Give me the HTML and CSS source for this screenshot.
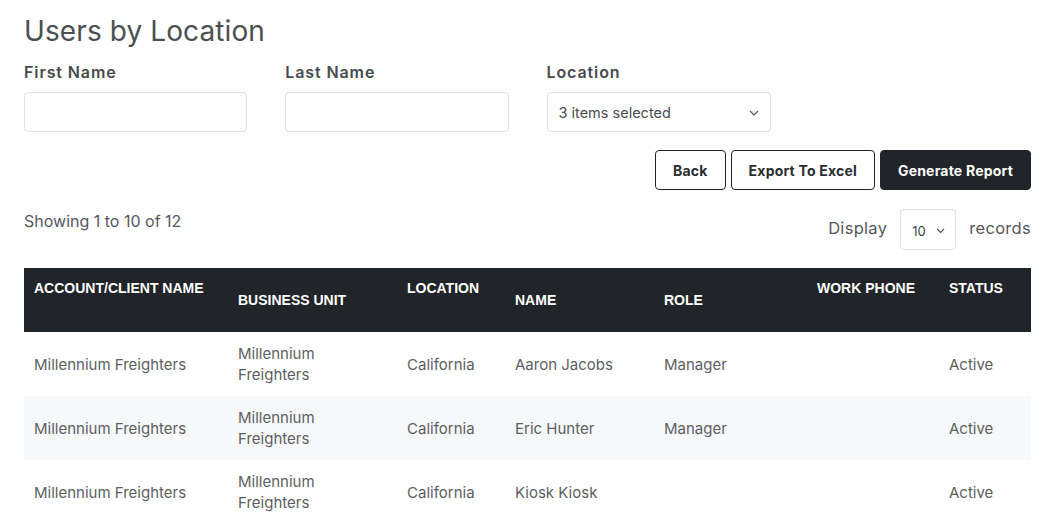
FILE: index.html
```html
<!DOCTYPE html>
<html lang="en">
<head>
<meta charset="utf-8">
<title>Users by Location</title>
<link rel="stylesheet" href="styles.css">
</head>
<body>
<div class="page">
  <h1 class="title">Users by Location</h1>

  <div class="filters">
    <div class="field">
      <label class="label">First Name</label>
      <input class="input" type="text">
    </div>
    <div class="field">
      <label class="label">Last Name</label>
      <input class="input" type="text">
    </div>
    <div class="field">
      <label class="label">Location</label>
      <div class="select">
        <span>3 items selected</span>
        <svg class="chev" width="10" height="6" viewBox="0 0 10 6"><path d="M1 1l4 4 4-4" fill="none" stroke="#555" stroke-width="1.2"/></svg>
      </div>
    </div>
  </div>

  <div class="actions">
    <button class="btn btn-outline">Back</button>
    <button class="btn btn-outline">Export To Excel</button>
    <button class="btn btn-dark">Generate Report</button>
  </div>

  <div class="tablebar">
    <span class="showing">Showing 1 to 10 of 12</span>
    <div class="display">
      <span>Display</span>
      <div class="mini-select">
        <span>10</span>
        <svg class="chev" width="9" height="6" viewBox="0 0 9 6"><path d="M1 1l3.5 3.5L8 1" fill="none" stroke="#555" stroke-width="1.1"/></svg>
      </div>
      <span>records</span>
    </div>
  </div>

  <table class="grid">
    <colgroup>
      <col class="c1"><col class="c2"><col class="c3"><col class="c4"><col class="c5"><col class="c6"><col class="c7">
    </colgroup>
    <thead>
      <tr>
        <th class="top">ACCOUNT/CLIENT NAME</th>
        <th>BUSINESS UNIT</th>
        <th class="top">LOCATION</th>
        <th>NAME</th>
        <th>ROLE</th>
        <th class="top">WORK PHONE</th>
        <th class="top">STATUS</th>
      </tr>
    </thead>
    <tbody>
      <tr>
        <td>Millennium Freighters</td>
        <td class="unit">Millennium Freighters</td>
        <td>California</td>
        <td>Aaron Jacobs</td>
        <td>Manager</td>
        <td></td>
        <td>Active</td>
      </tr>
      <tr>
        <td>Millennium Freighters</td>
        <td class="unit">Millennium Freighters</td>
        <td>California</td>
        <td>Eric Hunter</td>
        <td>Manager</td>
        <td></td>
        <td>Active</td>
      </tr>
      <tr>
        <td>Millennium Freighters</td>
        <td class="unit">Millennium Freighters</td>
        <td>California</td>
        <td>Kiosk Kiosk</td>
        <td></td>
        <td></td>
        <td>Active</td>
      </tr>
    </tbody>
  </table>
</div>
</body>
</html>
```

FILE: styles.css
```css
* { box-sizing: border-box; }

html, body {
  margin: 0;
  padding: 0;
  background: #ffffff;
}

body {
  font-family: Inter, "Liberation Sans", sans-serif;
  color: #555759;
  overflow: hidden;
}

.page {
  padding: 0 24px;
}

.title {
  margin: 14px 0 0;
  font-size: 28px;
  line-height: 34px;
  font-weight: 400;
  letter-spacing: 0.1px;
  color: #4c4f52;
}

.filters {
  display: grid;
  grid-template-columns: repeat(4, minmax(0, 1fr));
  column-gap: 38px;
  margin-top: 14px;
}

.field {
  display: flex;
  flex-direction: column;
  min-width: 0;
}

.label {
  font-size: 16px;
  line-height: 20px;
  font-weight: 600;
  letter-spacing: 0.9px;
  color: #474a4d;
  margin-bottom: 10px;
}

.input {
  width: 100%;
  height: 40px;
  border: 1px solid #dfe1e4;
  border-radius: 4px;
  background: #fff;
  font: inherit;
  margin: 0;
}

.select {
  height: 40px;
  border: 1px solid #dfe1e4;
  border-radius: 4px;
  display: flex;
  align-items: center;
  justify-content: space-between;
  padding: 1px 11px 0 11px;
  font-size: 14.5px;
  color: #4a4d50;
  margin-right: -1px;
}

.actions {
  display: flex;
  justify-content: flex-end;
  gap: 5px;
  margin-top: 18px;
}

.btn {
  height: 40px;
  border-radius: 4px;
  font-family: Inter, "Liberation Sans", sans-serif;
  font-size: 14px;
  font-weight: 700;
  letter-spacing: 0.2px;
  padding: 0 17px;
  margin: 0;
  cursor: pointer;
}

.btn-outline {
  background: #fff;
  border: 1px solid #212529;
  color: #2a2d31;
}

.btn-dark {
  background: #212529;
  border: 1px solid #212529;
  color: #fff;
}

.tablebar {
  display: flex;
  justify-content: space-between;
  align-items: flex-start;
  margin-top: 19px;
}

.showing {
  font-size: 16px;
  line-height: 24px;
  color: #55585b;
}

.display {
  display: flex;
  align-items: center;
  gap: 13px;
  font-size: 16.5px;
  letter-spacing: 0.3px;
  color: #55585b;
}

.display > span {
  margin-top: -4px;
}

.mini-select {
  width: 56px;
  height: 41px;
  border: 1px solid #dfe1e4;
  border-radius: 4px;
  display: flex;
  align-items: center;
  justify-content: space-between;
  padding: 3px 10px 0 11px;
  font-size: 13px;
  letter-spacing: 0;
  color: #3c3f42;
}

.grid {
  width: 100%;
  table-layout: fixed;
  border-collapse: collapse;
  margin-top: 18px;
}

.c1 { width: 204px; }
.c2 { width: 169px; }
.c3 { width: 108px; }
.c4 { width: 149px; }
.c5 { width: 153px; }
.c6 { width: 132px; }
.c7 { width: 92px; }

.grid th {
  background: #212529;
  color: #ffffff;
  font-family: "Liberation Sans", Arial, sans-serif;
  font-size: 14px;
  font-weight: 700;
  line-height: 20px;
  text-align: left;
  height: 64px;
  padding: 0 10px;
  vertical-align: middle;
  white-space: nowrap;
}

.grid th.top {
  vertical-align: top;
  padding-top: 10px;
}

.grid td {
  font-size: 15px;
  line-height: 21px;
  color: #5c5f62;
  padding: 11px 10px;
  height: 64px;
  vertical-align: middle;
}

.grid td.unit {
  padding-right: 30px;
}

.grid tbody tr:nth-child(even) td {
  background: #f7f8f9;
}
```
